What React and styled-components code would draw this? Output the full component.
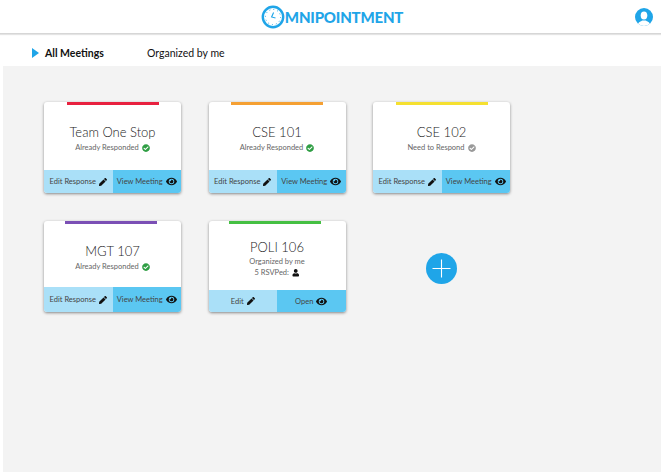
import React from "react";
import styled, { createGlobalStyle } from "styled-components";
import { FaCheckCircle, FaEye, FaPen, FaUser } from "react-icons/fa";

const Global = createGlobalStyle`
  html, body { margin: 0; padding: 0; background: #fff; }
  body { font-family: Lato, "Open Sans", sans-serif; color: #333; }
  * { box-sizing: border-box; }
`;
const Page = styled.div`
  width: 661px; height: 472px; display: flex; flex-direction: column; overflow: hidden;
`;
const Header = styled.header`
  height: 34px; flex: none; display: flex; align-items: center; justify-content: center;
  position: relative; border-bottom: 1px solid #d6d6d6; box-shadow: 0 1px 1px #e4e4e4;
`;
const Logo = styled.div`
  display: flex; align-items: center; color: #1fa5e8; font-size: 15px; font-weight: 900;
  letter-spacing: -0.2px; margin-left: 3px;
`;
const AvatarSlot = styled.div`
  position: absolute; right: 8px; top: 8px; width: 18px; height: 18px;
`;
const Tabs = styled.nav`
  height: 32px; flex: none; display: flex; align-items: center; padding: 5px 0 0 32px;
`;
const Arrow = styled.span`
  width: 0; height: 0; border-left: 7px solid #1fa5e8; border-top: 5.5px solid transparent;
  border-bottom: 5.5px solid transparent; margin-right: 6px;
`;
const Tab = styled.span`
  font-size: 10.5px; color: #111; font-weight: ${(p) => (p.$active ? 700 : 400)};
  width: ${(p) => p.$w}px;
`;
const Main = styled.main`
  flex: 1; margin-left: 3px; background: #f3f3f3; padding: 36px 0 0 41px;
  display: grid; grid-template-columns: repeat(3, 137px); grid-auto-rows: 91px;
  column-gap: 27.5px; row-gap: 28px; align-content: start;
`;
const Card = styled.article`
  background: #fff; border-radius: 3px; overflow: hidden; display: flex; flex-direction: column;
  box-shadow: 0 1px 3px rgba(0,0,0,.45);
`;
const Accent = styled.div`
  width: 92px; height: 3px; flex: none; background: ${(p) => p.$color}; margin-left: ${(p) => p.$offset}px;
`;
const Body = styled.div`
  flex: 1; display: flex; flex-direction: column; align-items: center; padding-top: ${(p) => (p.$compact ? 15 : 19)}px;
`;
const Title = styled.h2`
  margin: 0; font-size: 13px; font-weight: 300; line-height: 16px; color: #222;
`;
const Sub = styled.p`
  margin: ${(p) => (p.$gap ?? 2)}px 0 0; font-size: 7.5px; line-height: 10px; color: #666;
  display: flex; align-items: center; gap: 3px;
`;
const Footer = styled.div`
  height: ${(p) => p.$h}px; flex: none; display: grid; grid-template-columns: 68.5px 68.5px;
`;
const Action = styled.button`
  border: 0; padding: 0; margin: 0; font: inherit; font-size: 7.5px; color: #444;
  background: ${(p) => (p.$primary ? "#5bc7f2" : "#aae0f8")};
  display: flex; align-items: center; justify-content: center; gap: 3px;
`;
const Add = styled.button`
  width: 31px; height: 31px; border: 0; padding: 0; border-radius: 50%; background: #1fa5e8;
  justify-self: center; align-self: center; margin-top: 3px; display: flex; align-items: center; justify-content: center;
`;

const ClockLogo = () => (
  <svg width="24" height="24" viewBox="0 0 24 24" fill="none">
    <circle cx="12" cy="12" r="10.2" stroke="#1fa5e8" strokeWidth="2.4" />
    <circle cx="12" cy="12" r="7.6" stroke="#1fa5e8" strokeWidth="1" strokeDasharray="1 2.98" />
    <path d="M12.6 7.5 L10.6 12 L14.5 13" stroke="#1fa5e8" strokeWidth="1.1" />
  </svg>
);
const Avatar = () => (
  <svg width="18" height="18" viewBox="0 0 18 18">
    <defs><clipPath id="av"><circle cx="9" cy="9" r="9" /></clipPath></defs>
    <circle cx="9" cy="9" r="9" fill="#1fa5e8" />
    <g clipPath="url(#av)" fill="#fff">
      <ellipse cx="9" cy="7.6" rx="3.3" ry="4" />
      <path d="M2.5 18 C3 13.8 6 13.6 7.4 12.6 L10.6 12.6 C12 13.6 15 13.8 15.5 18 Z" />
    </g>
  </svg>
);
const Plus = () => (
  <svg width="19" height="19" viewBox="0 0 19 19">
    <path d="M9.5 0.5V18.5M0.5 9.5H18.5" stroke="#fff" strokeWidth="1.1" />
  </svg>
);

const Status = ({ text, done }) => (
  <Sub $gap={3}>
    {text} <FaCheckCircle size={8} color={done ? "#2f9e44" : "#999"} />
  </Sub>
);

const meetings = [
  { title: "Team One Stop", color: "#e8213f", offset: 23, status: "Already Responded", done: true, h: 23 },
  { title: "CSE 101", color: "#f5a033", offset: 22, status: "Already Responded", done: true, h: 23 },
  { title: "CSE 102", color: "#f5e030", offset: 23, status: "Need to Respond", done: false, h: 23 },
  { title: "MGT 107", color: "#7b4fb5", offset: 21, status: "Already Responded", done: true, h: 25 },
];

export default function App() {
  return (
    <Page>
      <Global />
      <Header>
        <Logo><ClockLogo />MNIPOINTMENT</Logo>
        <AvatarSlot><Avatar /></AvatarSlot>
      </Header>
      <Tabs>
        <Arrow />
        <Tab $active $w={102}>All Meetings</Tab>
        <Tab $w={90}>Organized by me</Tab>
      </Tabs>
      <Main>
        {meetings.map((m) => (
          <Card key={m.title}>
            <Accent $color={m.color} $offset={m.offset} />
            <Body>
              <Title>{m.title}</Title>
              <Status text={m.status} done={m.done} />
            </Body>
            <Footer $h={m.h}>
              <Action>Edit Response <FaPen size={8} color="#111" /></Action>
              <Action $primary>View Meeting <FaEye size={11} color="#111" /></Action>
            </Footer>
          </Card>
        ))}
        <Card>
          <Accent $color="#45c043" $offset={20} />
          <Body $compact>
            <Title>POLI 106</Title>
            <Sub $gap={2}>Organized by me</Sub>
            <Sub $gap={1}>5 RSVPed: <FaUser size={7.5} color="#111" /></Sub>
          </Body>
          <Footer $h={22}>
            <Action>Edit <FaPen size={8} color="#111" /></Action>
            <Action $primary>Open <FaEye size={11} color="#111" /></Action>
          </Footer>
        </Card>
        <Add aria-label="Add meeting"><Plus /></Add>
      </Main>
    </Page>
  );
}
